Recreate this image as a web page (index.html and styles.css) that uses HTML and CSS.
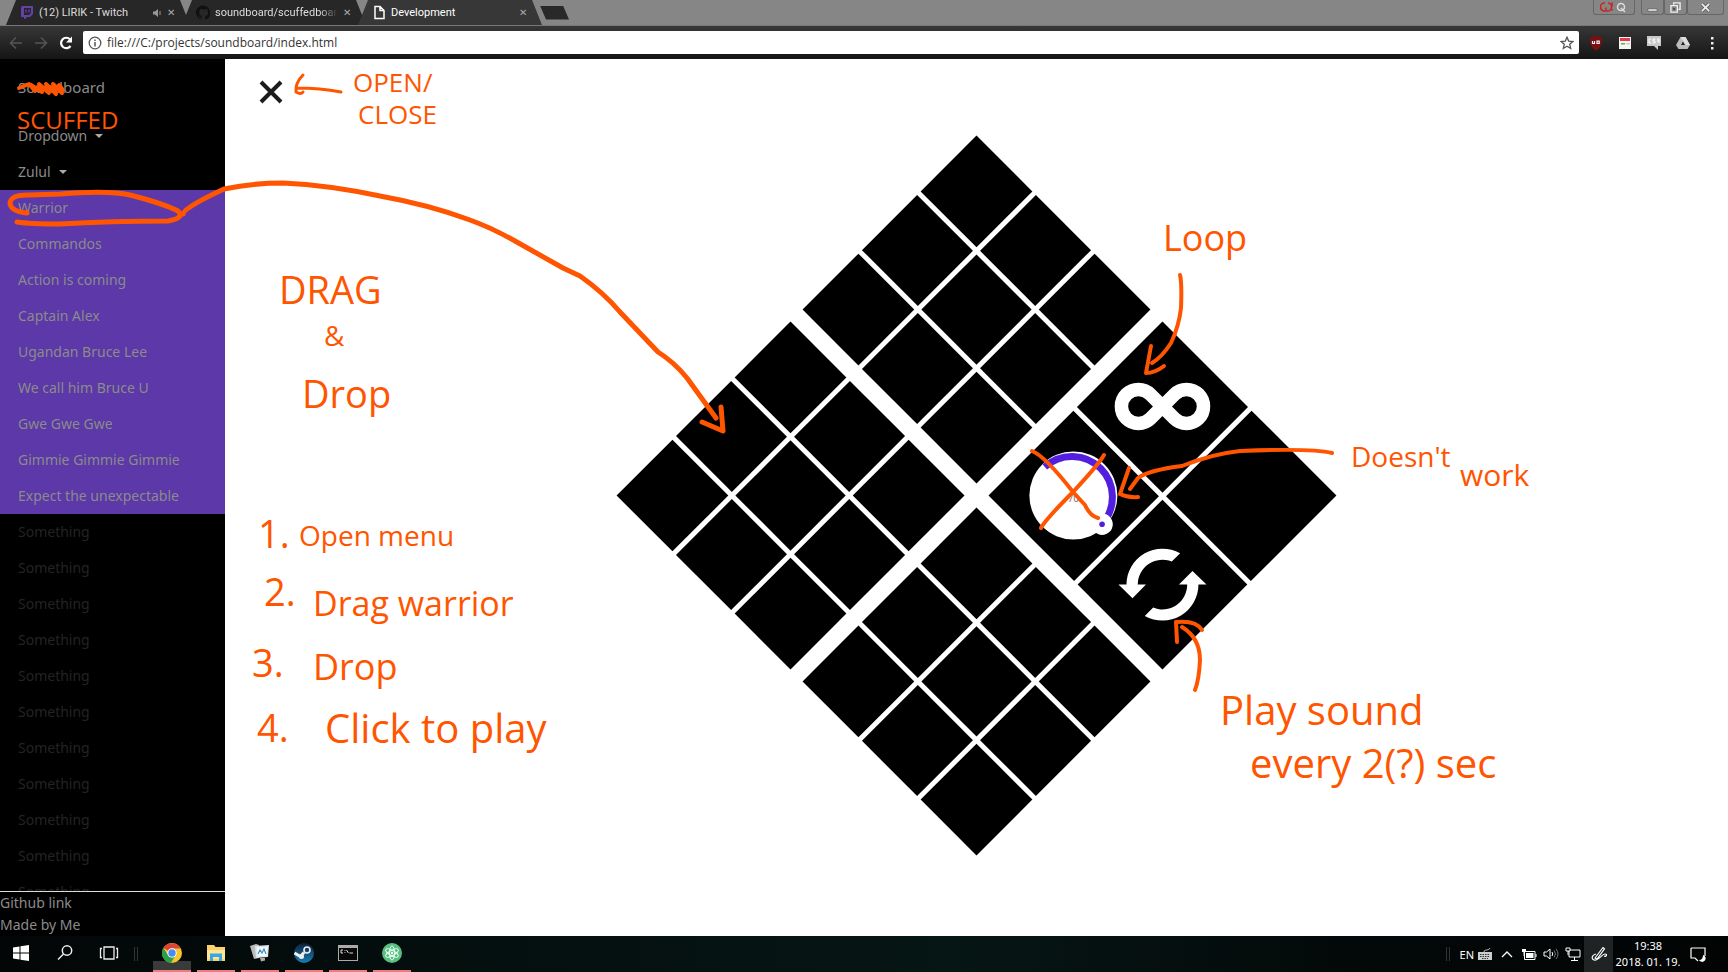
FILE: index.html
```html
<!DOCTYPE html>
<html lang="en">
<head>
<meta charset="utf-8">
<title>Development</title>
<link rel="stylesheet" href="styles.css">
</head>
<body>
<div class="screen">
  <header class="tabstrip">
    <div class="tabs">
      <div class="tab">
        <svg class="tab-icon" viewBox="0 0 14 15"><path d="M2 1h11v8l-3 3H7l-2 2H4v-2H1V3z" fill="#6441a5"/><path d="M4 3h7v5l-2 2H4z" fill="#28242e"/><path d="M6 4.500v3M9 4.500v3" stroke="#6441a5" stroke-width="1.300"/></svg>
        <span class="tab-title">(12) LIRIK - Twitch</span>
        <svg class="tab-sound" viewBox="0 0 10 10"><path d="M1 3.500h2L6 1v8L3 6.500H1z" fill="#999"/><path d="M8 3v4" stroke="#777" stroke-width="1.500"/></svg>
        <button class="tab-close" aria-label="Close tab">✕</button>
      </div>
      <div class="tab">
        <svg class="tab-icon" viewBox="0 0 16 16"><path d="M8 0C3.580 0 0 3.580 0 8c0 3.540 2.290 6.530 5.470 7.590.4.070.55-.17.55-.38v-1.490c-2.010.37-2.690-.49-2.690-1.130-.36-.23-.69-.92-.82-1.120 1.200-.3 1.900.9 1.900.9.72 1.210 1.870.87 2.330.66.07-.52.28-.87.51-1.070-1.780-.2-3.640-.89-3.640-3.950 0-.87.31-1.590.82-2.150-.08-.2-.36-1.020.08-2.120 0 0 .67-.21 2.200.82a7.600 7.600 0 0 1 4 0c1.530-1.040 2.200-.82 2.200-.82.44 1.100.16 1.920.08 2.120.51.560.82 1.270.82 2.150 0 3.070-1.870 3.750-3.650 3.950.29.250.54.730.54 1.480v2.200c0 .21.150.46.550.38A8 8 0 0 0 16 8c0-4.420-3.580-8-8-8z" fill="#111"/></svg>
        <span class="tab-title tab-title-long">soundboard/scuffedboard</span>
        <button class="tab-close" aria-label="Close tab">✕</button>
      </div>
      <div class="tab tab-active">
        <svg class="tab-icon" viewBox="0 0 14 15"><path d="M3 1.500h5l4 4v8H3zM8 1.500v4h4" fill="none" stroke="#fff" stroke-width="1.500"/></svg>
        <span class="tab-title">Development</span>
        <button class="tab-close" aria-label="Close tab">✕</button>
      </div>
      <button class="new-tab" aria-label="New tab"></button>
    </div>
    <div class="window-buttons">
      <button class="win-btn win-extra" aria-label="Profile"><svg viewBox="0 0 28 12"><path d="M4 10a4 4 0 0 1 1-8M3 10h3V6.500M8 2a4 4 0 0 1-1 8M12 1.500v4M12 8v1.500" fill="none" stroke="#c22" stroke-width="1.500"/><circle cx="21" cy="6" r="3.500" fill="none" stroke="#ddd" stroke-width="1.500"/><path d="M21 7l4 4" stroke="#ddd" stroke-width="1.500"/></svg></button>
      <div class="win-group">
        <button class="win-btn" aria-label="Minimize"><svg viewBox="0 0 12 12"><path d="M1 7.500h10v2.500H1z" fill="#eee" stroke="#444" stroke-width=".6"/></svg></button>
        <button class="win-btn" aria-label="Restore"><svg viewBox="0 0 12 12"><path d="M4 3V1h7v7H9M1 4h7v7H1z" fill="none" stroke="#eee" stroke-width="1.500"/><path d="M3.500 6.500h2v2h-2z" fill="#444"/></svg></button>
        <button class="win-btn win-close" aria-label="Close"><svg viewBox="0 0 12 12"><path d="M2 2l8 8M10 2l-8 8" stroke="#555" stroke-width="3.500"/><path d="M2 2l8 8M10 2l-8 8" stroke="#eee" stroke-width="2"/></svg></button>
      </div>
    </div>
  </header>

  <nav class="toolbar" aria-label="Browser toolbar">
    <button class="tool" aria-label="Back"><svg viewBox="0 0 16 16"><path d="M14 8H3M8 2.500L2.500 8 8 13.500" fill="none" stroke="#555" stroke-width="1.500"/></svg></button>
    <button class="tool" aria-label="Forward"><svg viewBox="0 0 16 16"><path d="M2 8h11M8 2.500L13.500 8 8 13.500" fill="none" stroke="#555" stroke-width="1.500"/></svg></button>
    <button class="tool" aria-label="Reload"><svg viewBox="0 0 16 16"><path d="M12.500 11A5.200 5.200 0 1 1 12 4.300" fill="none" stroke="#fff" stroke-width="2.200"/><path d="M14 1.500v6H8z" fill="#fff"/></svg></button>
    <div class="address">
      <svg class="info" viewBox="0 0 14 14"><circle cx="7" cy="7" r="5.800" fill="none" stroke="#555" stroke-width="1.300"/><path d="M7 6v4.500M7 3.500v1.500" stroke="#555" stroke-width="1.500"/></svg>
      <input class="url" type="text" aria-label="Address" value="file:///C:/projects/soundboard/index.html">
      <button class="star" aria-label="Bookmark"><svg viewBox="0 0 14 14"><path d="M7 1.200l1.700 3.900 4.200.4-3.200 2.800 1 4.200L7 10.300l-3.700 2.200 1-4.200L1.100 5.500l4.200-.4z" fill="none" stroke="#555" stroke-width="1.300"/></svg></button>
    </div>
    <div class="extensions">
      <button class="ext" aria-label="Ad blocker"><svg viewBox="0 0 16 16"><path d="M8 1l6 2c0 6-1 10-6 12.500C3 13 2 9 2 3z" fill="#7d0f12"/><path d="M4.500 6v2.500h2V6M9 6.200v2.300h2.200V6.200z" fill="none" stroke="#eee" stroke-width="1.200"/></svg></button>
      <button class="ext" aria-label="Notes"><svg viewBox="0 0 16 16"><path d="M2 2h12v12H2z" fill="#f4f4f4"/><path d="M3 3h10v3H3z" fill="#e33c50"/><path d="M4 8h4v1.500H4z" fill="#5b3"/><path d="M9 8h4v1.500H9z" fill="#ccc"/></svg></button>
      <button class="ext" aria-label="Style viewer"><svg viewBox="0 0 16 16"><path d="M1 1h14v10h-3v4l-4-4H1z" fill="#c8c8c8"/><path d="M5 4H3v4h2M9.500 4H7v2h2v2H6.500M13 8V4h-2M11 6h2" fill="none" stroke="#fff"/></svg></button>
      <button class="ext" aria-label="Drive"><svg viewBox="0 0 16 16"><path d="M5.500 2h5L15 10l-2.500 4h-9L1 10z" fill="#bbb"/><path d="M5.500 2h5L15 10h-4.500z" fill="#ddd"/><path d="M8 6.500l2 3.500H6z" fill="#222"/></svg></button>
      <button class="ext" aria-label="Menu"><svg viewBox="0 0 16 16"><path d="M7 2h2.500v2.500H7zM7 7h2.500v2.500H7zM7 12h2.500v2.500H7z" fill="#eee"/></svg></button>
    </div>
  </nav>

  <div class="page">
    <aside class="sidebar">
      <nav class="menu" aria-label="Sounds">
        <a class="brand" href="#">Soundboard</a>
        <button class="item toggle">Dropdown<span class="caret"></span></button>
        <button class="item toggle">Zulul<span class="caret"></span></button>
        <div class="submenu">
          <a class="item" href="#">Warrior</a>
          <a class="item" href="#">Commandos</a>
          <a class="item" href="#">Action is coming</a>
          <a class="item" href="#">Captain Alex</a>
          <a class="item" href="#">Ugandan Bruce Lee</a>
          <a class="item" href="#">We call him Bruce U</a>
          <a class="item" href="#">Gwe Gwe Gwe</a>
          <a class="item" href="#">Gimmie Gimmie Gimmie</a>
          <a class="item" href="#">Expect the unexpectable</a>
        </div>
        <a class="item dim" href="#">Something</a>
        <a class="item dim" href="#">Something</a>
        <a class="item dim" href="#">Something</a>
        <a class="item dim" href="#">Something</a>
        <a class="item dim" href="#">Something</a>
        <a class="item dim" href="#">Something</a>
        <a class="item dim" href="#">Something</a>
        <a class="item dim" href="#">Something</a>
        <a class="item dim" href="#">Something</a>
        <a class="item dim" href="#">Something</a>
        <a class="item dim" href="#">Something</a>
      </nav>
      <footer class="credits">
        <a href="#">Github link</a>
        <span>Made by Me</span>
      </footer>
    </aside>

    <main class="stage">
      <button class="menu-close" aria-label="Close menu"><svg viewBox="0 0 24 24"><path d="M2 2l20 20M22 2L2 22" stroke="#1a1c1e" stroke-width="4"/></svg></button>
      <div class="board">
        <div class="group pads">
          <button class="pad" aria-label="Pad 1"></button><button class="pad" aria-label="Pad 2"></button><button class="pad" aria-label="Pad 3"></button>
          <button class="pad" aria-label="Pad 4"></button><button class="pad" aria-label="Pad 5"></button><button class="pad" aria-label="Pad 6"></button>
          <button class="pad" aria-label="Pad 7"></button><button class="pad" aria-label="Pad 8"></button><button class="pad" aria-label="Pad 9"></button>
        </div>
        <div class="group controls">
          <button class="pad" aria-label="Loop"><svg class="glyph" viewBox="-50 -50 100 100"><path d="M-12 -12A17 17 0 1 0 -12 12L12 -12A17 17 0 1 1 12 12Z" fill="none" stroke="#fff" stroke-width="13.500"/></svg></button>
          <button class="pad" aria-label="Unassigned"></button>
          <div class="pad">
            <svg class="glyph" viewBox="-50 -50 100 100"><circle r="44" fill="#fff"/><path d="M-28.600 -28.600A40.500 40.500 0 0 1 28.600 28.600" fill="none" stroke="#531fdf" stroke-width="7"/><circle cx="28.700" cy="28.700" r="10.700" fill="#fff"/><circle cx="28.700" cy="28.700" r="2.800" fill="#531fdf"/><text class="knob-value" x="0" y="6" text-anchor="middle">70</text></svg>
          </div>
          <button class="pad" aria-label="Repeat"><svg class="glyph" viewBox="-50 -50 100 100"><g fill="#fff"><path d="M17.700 -31.300A36 36 0 0 0 -36 0H-44L-30 13.700L-16.500 0H-24.700A24.700 24.700 0 0 1 9.300 -23Z"/><path transform="rotate(180)" d="M17.700 -31.300A36 36 0 0 0 -36 0H-44L-30 13.700L-16.500 0H-24.700A24.700 24.700 0 0 1 9.300 -23Z"/></g></svg></button>
        </div>
        <div class="group pads">
          <button class="pad" aria-label="Pad 10"></button><button class="pad" aria-label="Pad 11"></button><button class="pad" aria-label="Pad 12"></button>
          <button class="pad" aria-label="Pad 13"></button><button class="pad" aria-label="Pad 14"></button><button class="pad" aria-label="Pad 15"></button>
          <button class="pad" aria-label="Pad 16"></button><button class="pad" aria-label="Pad 17"></button><button class="pad" aria-label="Pad 18"></button>
        </div>
        <div class="group pads">
          <button class="pad" aria-label="Pad 19"></button><button class="pad" aria-label="Pad 20"></button><button class="pad" aria-label="Pad 21"></button>
          <button class="pad" aria-label="Pad 22"></button><button class="pad" aria-label="Pad 23"></button><button class="pad" aria-label="Pad 24"></button>
          <button class="pad" aria-label="Pad 25"></button><button class="pad" aria-label="Pad 26"></button><button class="pad" aria-label="Pad 27"></button>
        </div>
      </div>
    </main>
  </div>

  <footer class="taskbar">
    <div class="launch">
      <button class="task" aria-label="Start"><svg viewBox="0 0 20 20"><path d="M2 4.500l6.500-1v6H2zM9.500 3.300L18 2v7.500H9.500zM2 10.500h6.500v6L2 15.500zM9.500 10.500H18V18l-8.500-1.300z" fill="#fff"/></svg></button>
      <button class="task" aria-label="Search"><svg viewBox="0 0 20 20"><circle cx="12" cy="7.500" r="4.700" fill="none" stroke="#eee" stroke-width="1.500"/><path d="M8.500 11L3 16.500" stroke="#eee" stroke-width="1.500"/></svg></button>
      <button class="task" aria-label="Task view"><svg viewBox="0 0 20 20"><path d="M5 4h10v12H5zM3 5.500H1.500v9H3M17 5.500h1.500v9H17" fill="none" stroke="#eee" stroke-width="1.300"/></svg></button>
      <span class="grip"></span>
      <button class="task running current" aria-label="Chrome"><svg viewBox="0 0 20 20"><circle cx="10" cy="10" r="10" fill="#f7c52d"/><path d="M10 10L1.300 5A10 10 0 0 1 18.700 5.500H10z" fill="#dd4433"/><path d="M1.300 5A10 10 0 0 0 9 20l4.500-8-3.500 2-4-2z" fill="#2a9e4b"/><circle cx="10" cy="10" r="4.700" fill="#fff"/><circle cx="10" cy="10" r="3.700" fill="#4a8af4"/></svg></button>
      <button class="task running" aria-label="File Explorer"><svg viewBox="0 0 20 20"><path d="M1 2h7l1.500 2H19v14H1z" fill="#f9d36b"/><path d="M1 7h18v9H1z" fill="#ffe598"/><path d="M4 10.500h12V18h-3v-4H7v4H4z" fill="#3aa8e0"/></svg></button>
      <button class="task running" aria-label="Monitor"><svg viewBox="0 0 20 20"><path d="M0 3l6-2 3 1v13l-5 1z" fill="#b9bcbc"/><path d="M5 3l14-1-1 12-12 1z" fill="#e0e5e8"/><path d="M7 4.500l10.500-.6-.8 8.600-9 .8z" fill="#f5fbff"/><path d="M8 11l2-4 2 3 2-4 2 5" fill="none" stroke="#3a8fc0" stroke-width="1.200"/><path d="M10 15h5v2.500l-4 1z" fill="#aaa"/></svg></button>
      <button class="task running" aria-label="Steam"><svg viewBox="0 0 20 20"><defs><linearGradient id="steam" x2="0" y2="1"><stop offset="0" stop-color="#111d35"/><stop offset="1" stop-color="#1680b8"/></linearGradient></defs><circle cx="10" cy="10" r="10" fill="url(#steam)"/><circle cx="13" cy="7" r="3" fill="none" stroke="#eee" stroke-width="1.600"/><path d="M.5 10l6 3.500L10 9.500" fill="none" stroke="#eee" stroke-width="3"/><circle cx="7.500" cy="13.500" r="2.500" fill="#eee"/></svg></button>
      <button class="task running" aria-label="Command prompt"><svg viewBox="0 0 20 20"><path d="M0 2h20v16H0z" fill="#aaa"/><path d="M1 5h18v12H1z" fill="#080808"/><path d="M5 7H3v3h2M7 7v.8M7 9.200v.8M8.500 7l2 3M11.500 10h3.500" fill="none" stroke="#ddd"/></svg></button>
      <button class="task running" aria-label="Atom"><svg viewBox="0 0 20 20"><circle cx="10" cy="10" r="10" fill="#5bbf83"/><g fill="none" stroke="#e7fff0"><ellipse cx="10" cy="10" rx="2.600" ry="7"/><ellipse cx="10" cy="10" rx="2.600" ry="7" transform="rotate(60 10 10)"/><ellipse cx="10" cy="10" rx="2.600" ry="7" transform="rotate(120 10 10)"/></g><circle cx="10" cy="10" r="1.200" fill="#fff"/></svg></button>
    </div>
    <div class="tray">
      <span class="grip"></span>
      <button class="lang">EN</button>
      <button class="tray-btn" aria-label="Keyboard"><svg viewBox="0 0 16 16"><path d="M1 6h14v8H1z" fill="#ccc"/><path d="M3 8.500h10M3 10.500h10M5 12.500h6" stroke="#333" stroke-dasharray="1.500 1"/><path d="M7 6c0-3 5-1 6-4" fill="none" stroke="#ccc"/></svg></button>
      <button class="tray-btn" aria-label="Show hidden icons"><svg viewBox="0 0 16 16"><path d="M3 11l5-5 5 5" fill="none" stroke="#fff" stroke-width="1.300"/></svg></button>
      <button class="tray-btn" aria-label="Battery"><svg viewBox="0 0 16 16"><path d="M3.500 5.500H14v8H3.500z" fill="none" stroke="#fff"/><path d="M5 7h7.500v5H5zM14.500 8h1v3h-1zM1 3h4v3H1zM2.500 6h1v4h-1z" fill="#fff"/></svg></button>
      <button class="tray-btn" aria-label="Volume"><svg viewBox="0 0 16 16"><path d="M1 6h2.500L7 3v10L3.500 10H1z" fill="none" stroke="#fff"/><path d="M9 6q1.500 2 0 4" fill="none" stroke="#fff"/><path d="M11 4.500q3 3.500 0 7M13 3q4 5 0 10" fill="none" stroke="#777"/></svg></button>
      <button class="tray-btn" aria-label="Network"><svg viewBox="0 0 16 16"><path d="M4 4h11v7H4zM9.500 11v3M6 14.500h7" fill="none" stroke="#fff"/><path d="M1 2h4v3H1zM3 5v4" fill="#000" stroke="#fff"/></svg></button>
      <button class="tray-btn pen" aria-label="Pen workspace"><svg viewBox="0 0 16 16"><path d="M4 12L12 1.500l1.500 1.300L6 13zM5 8c-6 2-4 7 0 6s6-6 9-6 1 3-1 2" fill="none" stroke="#fff" stroke-width="1.200"/></svg></button>
      <div class="clock"><span>19:38</span><span>2018. 01. 19.</span></div>
      <button class="tray-btn notify" aria-label="Notifications"><svg viewBox="0 0 16 16"><path d="M1 2h14v8M1 2v10h4l3 3" fill="none" stroke="#fff" stroke-width="1.200"/><path d="M13 9a3.500 3.500 0 1 1-4 5q4 0 4-5z" fill="#fff"/></svg></button>
    </div>
  </footer>

  <svg class="ink" viewBox="0 0 1728 972">
    <g class="line">
      <path d="M19 88L29 84L35 91L31 85L42 92L39 84L49 93L46 84L56 94L53 84L62 93L59 85L63 90"/>
      <path class="fine" d="M341 92Q320 88 297 88M303 75Q295 83 296 92Q301 95 303 92"/>
      <path d="M1180 275Q1182 283 1181 308Q1179 326 1171 343Q1162 357 1152 363M1151 346L1146 373Q1155 373 1164 366"/>
      <path d="M1332 453Q1312 448 1240 451Q1212 454 1182 466Q1149 470 1138 478L1130 489M1129 468L1120 494Q1128 498 1138 497"/>
      <path d="M1032 451Q1045 456 1073 492L1085 505Q1090 516 1098 518M1104 455Q1099 464 1073 492Q1045 520 1041 528"/>
      <path d="M1177 642L1176 622Q1196 620 1202 630M1182 627Q1200 638 1200 660Q1199 680 1195 690"/>
    </g>
    <g class="line line-wide">
      <path d="M27 213Q12 212 10 204Q10 194 30 195L60 194Q108 190 130 195Q162 203 178 211Q185 218 168 221Q110 221 60 224Q30 224 17 222"/>
      <path d="M183 214Q183 208 224 189Q252 183 283 183Q328 185 380 196Q430 205 470 220Q492 228 515 241L563 268L580 276Q603 292 620 312L658 352Q674 362 687 378L716 418M702 422L723 431L721 407"/>
    </g>
    <g class="note">
      <text x="17" y="129" font-size="24">SCUFFED</text>
      <text x="353" y="92" font-size="26">OPEN/</text>
      <text x="358" y="124" font-size="26">CLOSE</text>
      <text x="279" y="304" font-size="38">DRAG</text>
      <text x="324" y="346" font-size="28">&amp;</text>
      <text x="302" y="408" font-size="38">Drop</text>
      <text x="258" y="548" font-size="38">1.</text>
      <text x="299" y="546" font-size="28">Open menu</text>
      <text x="264" y="606" font-size="38">2.</text>
      <text x="313" y="616" font-size="34">Drag warrior</text>
      <text x="252" y="677" font-size="38">3.</text>
      <text x="313" y="680" font-size="36">Drop</text>
      <text x="257" y="742" font-size="38">4.</text>
      <text x="325" y="743" font-size="40">Click to play</text>
      <text x="1163" y="251" font-size="36">Loop</text>
      <text x="1351" y="467" font-size="28">Doesn't</text>
      <text x="1460" y="486" font-size="30">work</text>
      <text x="1220" y="725" font-size="40">Play sound</text>
      <text x="1250" y="778" font-size="40">every 2(?) sec</text>
    </g>
  </svg>
</div>
</body>
</html>
```
FILE: styles.css
```css
* { box-sizing: border-box; }

body {
  margin: 0;
  font-family: "Noto Sans", "Open Sans", sans-serif;
  font-size: 14px;
  background: #fff;
}

button {
  margin: 0;
  padding: 0;
  border: 0;
  background: none;
  color: inherit;
  font: inherit;
}

a { color: inherit; text-decoration: none; }
svg { display: block; }

.screen {
  position: relative;
  display: flex;
  flex-direction: column;
  height: 100vh;
  overflow: hidden;
}

/* Tab strip */
.tabstrip {
  display: flex;
  justify-content: space-between;
  height: 26px;
  flex: none;
  background: #868686;
  border-bottom: 1px solid #777;
}

.tabs { display: flex; align-items: flex-end; padding-left: 6px; }

.tab {
  display: flex;
  align-items: center;
  gap: 5px;
  width: 184px;
  height: 25px;
  margin-right: -6px;
  padding: 0 15px 0 14px;
  background: #272727;
  color: #ddd;
  font-family: Roboto, sans-serif;
  font-size: 11px;
  clip-path: polygon(10px 0, 174px 0, 100% 100%, 0 100%);
}

.tab + .tab { margin-left: -2px; }
.tab-active { background: #373737; color: #fff; }
.tab-icon { width: 14px; height: 15px; flex: none; }
.tab-sound { width: 10px; height: 10px; flex: none; }
.tab-title { flex: 1; overflow: hidden; white-space: nowrap; }
.tab-title-long {
  mask-image: linear-gradient(90deg, #000 85%, transparent);
}
.tab-close { color: #aaa; font-size: 10px; }

.new-tab {
  align-self: center;
  width: 29px;
  height: 14px;
  margin-left: 4px;
  background: #292929;
  clip-path: polygon(0 0, 23px 0, 100% 100%, 6px 100%);
}

.window-buttons { display: flex; gap: 6px; padding-right: 4px; }
.win-group { display: flex; }
.win-btn {
  display: grid;
  place-items: center;
  width: 23px;
  height: 15px;
  border: 1px solid #666;
  border-top: 0;
  border-radius: 0 0 3px 3px;
}
.win-btn svg { width: 11px; height: 11px; }
.win-extra { width: 42px; }
.win-extra svg { width: 28px; height: 12px; }
.win-close { width: 37px; }

/* Browser toolbar */
.toolbar {
  display: flex;
  align-items: center;
  height: 33px;
  flex: none;
  padding: 0 8px;
  background: linear-gradient(#373737, #151515);
}

.tool { width: 25px; }
.tool svg { width: 16px; height: 16px; }

.address {
  display: flex;
  align-items: center;
  gap: 5px;
  flex: 1;
  height: 23px;
  padding: 0 5px;
  background: #fff;
  border-radius: 2px;
}
.info { width: 14px; height: 14px; }
.url {
  flex: 1;
  padding: 0;
  border: 0;
  outline: 0;
  color: #333;
  font: 12px "Open Sans", sans-serif;
}
.star svg { width: 14px; height: 14px; }

.extensions { display: flex; gap: 13px; padding: 0 0 0 9px; }
.ext svg { width: 16px; height: 16px; }

/* Page */
.page { display: flex; flex: 1; min-height: 0; }

.sidebar {
  display: flex;
  flex-direction: column;
  width: 225px;
  flex: none;
  background: #000;
  color: #8b8b8b;
}

.menu { flex: 1; min-height: 0; overflow: hidden; }
.brand {
  display: block;
  padding: 10px 18px 13px;
  font-size: 15px;
  line-height: 36px;
}
.item {
  display: block;
  width: 100%;
  padding: 0 18px;
  line-height: 36px;
  text-align: left;
}
.toggle { display: flex; align-items: center; gap: 8px; }
.caret {
  border: 4px solid transparent;
  border-top-color: #aaa;
  border-bottom: 0;
}
.submenu { background: #5c38a8; }
.dim { color: #222424; }

.credits {
  display: flex;
  flex-direction: column;
  border-top: 1px solid #ddd;
  line-height: 22px;
}

.stage {
  display: grid;
  grid-template-columns: 1fr;
  flex: 1;
  place-items: center;
  padding-bottom: 5px;
  background: #fff;
}
.stage > * { grid-area: 1 / 1; }

.menu-close { place-self: start; margin: 21px 34px; }
.menu-close svg { width: 24px; height: 24px; }

.board {
  display: grid;
  grid-template: repeat(2, minmax(0, 1fr)) / repeat(2, minmax(0, 1fr));
  gap: 17px;
  width: 509px;
  aspect-ratio: 1;
  transform: rotate(45deg);
}
.group { display: grid; gap: 5px; }
.pads { grid-template: repeat(3, minmax(0, 1fr)) / repeat(3, minmax(0, 1fr)); }
.controls { grid-template: repeat(2, minmax(0, 1fr)) / repeat(2, minmax(0, 1fr)); }
.pad { display: grid; place-items: center; background: #000; }
.glyph { width: 100px; height: 100px; transform: rotate(-45deg); }
.knob-value { fill: #777; font-size: 10px; }

/* Taskbar */
.taskbar {
  display: flex;
  justify-content: space-between;
  height: 36px;
  flex: none;
  background: linear-gradient(90deg, #030607, #04100f 30%, #061615 55%, #030808 80%, #020404);
  color: #fff;
}
.launch, .tray { display: flex; align-items: center; }
.launch { gap: 6px; padding-left: 2px; }
.task {
  display: grid;
  place-items: center;
  width: 38px;
  height: 36px;
  border-bottom: 2px solid transparent;
}
.task svg { width: 20px; height: 20px; }
.running { border-bottom-color: #ee7b7e; }
.current { background: linear-gradient(transparent 25px, #393b3b 25px); }
.grip {
  width: 4px;
  height: 14px;
  border: solid #333;
  border-width: 0 1px;
}
.launch .grip { margin-right: 9px; }

.tray { padding-right: 19px; font-size: 11px; }
.lang { margin-left: 10px; }
.tray-btn { display: grid; place-items: center; width: 22px; height: 36px; }
.tray-btn svg { width: 16px; height: 16px; }
.pen { width: 29px; background: #1f2323; }
.clock {
  display: flex;
  flex-direction: column;
  width: 70px;
  line-height: 16px;
  text-align: center;
}
.notify { margin-left: 4px; }

/* Pen annotations over the desktop */
.ink {
  position: absolute;
  inset: 0;
  width: 100%;
  height: 100%;
  pointer-events: none;
}
.line {
  fill: none;
  stroke: #ff5500;
  stroke-width: 4;
  stroke-linecap: round;
  stroke-linejoin: round;
}
.line-wide { stroke-width: 5; }
.fine { stroke-width: 3; }
.note {
  fill: #ff5500;
  font-family: "Open Sans", sans-serif;
}
```
